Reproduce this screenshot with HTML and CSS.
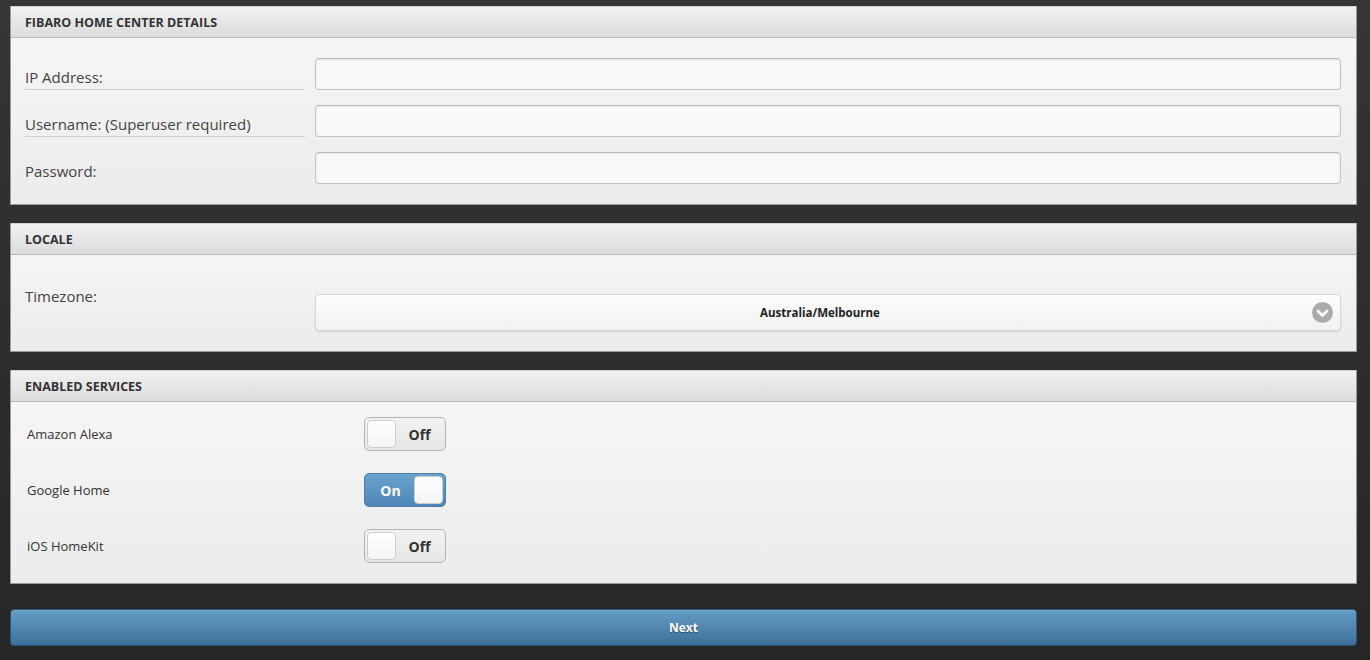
FILE: index.html
```html
<!DOCTYPE html>
<html>
<head>
<meta charset="utf-8">
<title>Setup</title>
<link rel="stylesheet" href="styles.css">
</head>
<body>
<div class="page">
  <section class="panel">
    <div class="panel-head">FIBARO HOME CENTER DETAILS</div>
    <div class="panel-body form-body">
      <div class="row">
        <label class="label underline">IP Address:</label>
        <input class="field" type="text">
      </div>
      <div class="row">
        <label class="label underline">Username: (Superuser required)</label>
        <input class="field" type="text">
      </div>
      <div class="row">
        <label class="label">Password:</label>
        <input class="field" type="password">
      </div>
    </div>
  </section>

  <section class="panel">
    <div class="panel-head">LOCALE</div>
    <div class="panel-body locale-body">
      <div class="row top">
        <label class="label tz">Timezone:</label>
        <div class="select">
          <span class="select-text">Australia/Melbourne</span>
          <span class="select-arrow">
            <svg width="21" height="21" viewBox="0 0 21 21"><circle cx="10.5" cy="10.5" r="10.5" fill="#acacac"/><path d="M6 9 L10.5 13.5 L15 9" fill="none" stroke="#fff" stroke-width="2.6" stroke-linecap="round" stroke-linejoin="round"/></svg>
          </span>
        </div>
      </div>
    </div>
  </section>

  <section class="panel">
    <div class="panel-head">ENABLED SERVICES</div>
    <div class="panel-body services-body">
      <div class="svc-row">
        <span class="svc-label">Amazon Alexa</span>
        <div class="toggle off"><span class="knob"></span><span class="toggle-text">Off</span></div>
      </div>
      <div class="svc-row">
        <span class="svc-label">Google Home</span>
        <div class="toggle on"><span class="toggle-text">On</span><span class="knob"></span></div>
      </div>
      <div class="svc-row">
        <span class="svc-label">iOS HomeKit</span>
        <div class="toggle off"><span class="knob"></span><span class="toggle-text">Off</span></div>
      </div>
    </div>
  </section>

  <button class="next">Next</button>
</div>
</body>
</html>
```
FILE: styles.css
```css
html, body {
  margin: 0;
  padding: 0;
}
body {
  background: linear-gradient(#353535, #262626);
  min-height: 660px;
  font-family: "Open Sans", "Liberation Sans", sans-serif;
  color: #444;
}
.page {
  width: 1347px;
  margin-left: 10px;
  padding-top: 6px;
  display: flex;
  flex-direction: column;
  gap: 18px;
}
.panel {
  border: 1px solid #9a9a9a;
  border-top: 0;
  background: linear-gradient(#f7f7f7, #ececec);
}
.panel-head {
  height: 30px;
  display: flex;
  align-items: center;
  padding-left: 14px;
  font-size: 12.5px;
  font-weight: 700;
  color: #333;
  background: linear-gradient(#f1f1f1, #dcdcdc);
  border-bottom: 1px solid #b9b9b9;
  border-top: 1px solid #cfcfcf;
}
.panel-body {
  padding: 20px 15px 20px 14px;
}
.form-body {
  display: flex;
  flex-direction: column;
  gap: 15px;
}
.row {
  display: flex;
  align-items: stretch;
  gap: 10px;
}
.row.top {
  align-items: flex-start;
}
.label {
  width: 280px;
  flex: none;
  display: flex;
  align-items: center;
  padding-top: 6px;
  box-sizing: border-box;
  font-size: 15px;
  color: #444;
}
.label.underline {
  border-bottom: 1px solid #cfcfcf;
}
.field {
  flex: 1;
  height: 32px;
  box-sizing: border-box;
  margin: 0;
  border: 1px solid #c4c4c4;
  border-top-color: #b8b8b8;
  border-radius: 4px;
  background: #f9f9f9;
  box-shadow: inset 0 1px 2px rgba(0,0,0,0.08);
}
.locale-body {
  padding-bottom: 20px;
}
.label.tz {
  padding-top: 0;
  margin-top: 11px;
  line-height: 20px;
}
.select {
  flex: 1;
  margin-top: 19px;
  height: 37px;
  box-sizing: border-box;
  border: 1px solid #d6d6d6;
  border-radius: 4px;
  background: linear-gradient(#fdfdfd, #f1f1f1);
  box-shadow: 0 1px 2px rgba(0,0,0,0.12);
  display: flex;
  align-items: center;
  padding-right: 16px;
  position: relative;
}
.select-text {
  flex: 1;
  text-align: center;
  font-size: 11.5px;
  font-weight: 700;
  color: #222;
}
.select-arrow {
  position: absolute;
  right: 7px;
  top: 7px;
  width: 21px;
  height: 21px;
}
.select-arrow svg {
  display: block;
}
.services-body {
  padding: 15px 15px 20px 16px;
  display: flex;
  flex-direction: column;
  gap: 22px;
}
.svc-row {
  display: flex;
  align-items: center;
}
.svc-label {
  width: 337px;
  flex: none;
  font-size: 13px;
  color: #333;
}
.toggle {
  width: 82px;
  height: 34px;
  box-sizing: border-box;
  border-radius: 5px;
  border: 1px solid #b5b5b5;
  display: flex;
  align-items: center;
  padding: 2px;
  gap: 0;
}
.toggle.off {
  background: linear-gradient(#f2f2f2, #e6e6e6);
}
.toggle.on {
  background: linear-gradient(#6aa3cd, #4c86b6);
  border-color: #4f7fa6;
}
.knob {
  width: 29px;
  height: 28px;
  border-radius: 4px;
  background: linear-gradient(#ffffff, #f4f4f4);
  border: 1px solid #cdcdcd;
  box-sizing: border-box;
  flex: none;
}
.toggle-text {
  flex: 1;
  text-align: center;
  font-size: 14px;
  font-weight: 700;
}
.toggle.off .toggle-text {
  color: #333;
}
.toggle.on .toggle-text {
  color: #fff;
}
.next {
  margin-top: 7px;
  height: 37px;
  width: 100%;
  border: 1px solid #2a5678;
  border-radius: 4px;
  background: linear-gradient(#649dc4, #3e6f9b);
  color: #fff;
  font-family: "Open Sans", "Liberation Sans", sans-serif;
  font-size: 12px;
  font-weight: 700;
  text-shadow: 0 1px 1px rgba(0,0,0,0.4);
  box-shadow: inset 0 1px 0 rgba(255,255,255,0.15);
}
```
